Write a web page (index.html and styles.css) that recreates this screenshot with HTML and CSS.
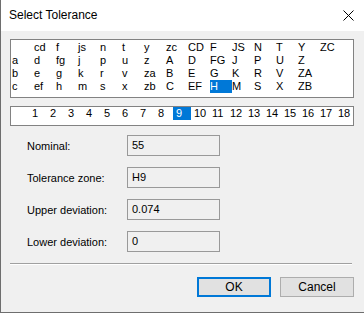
FILE: index.html
```html
<!DOCTYPE html>
<html>
<head>
<meta charset="utf-8">
<link rel="stylesheet" href="styles.css">
</head>
<body>
<div class="window">
  <div class="titlebar">
    <span class="title">Select Tolerance</span>
    <svg class="close" width="11" height="11" viewBox="0 0 11 11"><path d="M0.5 0.5 L10.5 10.5 M10.5 0.5 L0.5 10.5" stroke="#000" stroke-width="1" fill="none"/></svg>
  </div>
  <div class="content">
    <div class="letters">
      <span></span><span>cd</span><span>f</span><span>js</span><span>n</span><span>t</span><span>y</span><span>zc</span><span>CD</span><span>F</span><span>JS</span><span>N</span><span>T</span><span>Y</span><span>ZC</span>
      <span>a</span><span>d</span><span>fg</span><span>j</span><span>p</span><span>u</span><span>z</span><span>A</span><span>D</span><span>FG</span><span>J</span><span>P</span><span>U</span><span>Z</span><span></span>
      <span>b</span><span>e</span><span>g</span><span>k</span><span>r</span><span>v</span><span>za</span><span>B</span><span>E</span><span>G</span><span>K</span><span>R</span><span>V</span><span>ZA</span><span></span>
      <span>c</span><span>ef</span><span>h</span><span>m</span><span>s</span><span>x</span><span>zb</span><span>C</span><span>EF</span><span class="sel">H</span><span>M</span><span>S</span><span>X</span><span>ZB</span><span></span>
    </div>
    <div class="grades">
      <span>1</span><span>2</span><span>3</span><span>4</span><span>5</span><span>6</span><span>7</span><span>8</span><span class="sel">9</span><span>10</span><span>11</span><span>12</span><span>13</span><span>14</span><span>15</span><span>16</span><span>17</span><span>18</span>
    </div>
    <div class="fields">
      <label>Nominal:</label><div class="field">55</div>
      <label>Tolerance zone:</label><div class="field">H9</div>
      <label>Upper deviation:</label><div class="field">0.074</div>
      <label>Lower deviation:</label><div class="field">0</div>
    </div>
    <div class="separator"></div>
    <div class="buttons">
      <button class="btn default">OK</button>
      <button class="btn">Cancel</button>
    </div>
  </div>
</div>
</body>
</html>
```
FILE: styles.css
```css
html, body {
  margin: 0;
  padding: 0;
}
body {
  width: 364px;
  height: 313px;
  overflow: hidden;
  font-family: "Liberation Sans", Arial, sans-serif;
  font-size: 11px;
  color: #000;
}
.window {
  box-sizing: border-box;
  width: 364px;
  height: 313px;
  background: #f0f0f0;
  border-left: 1px solid #6e6e6e;
  border-bottom: 1px solid #6e6e6e;
  display: flex;
  flex-direction: column;
}
.titlebar {
  height: 31px;
  background: #fff;
  display: flex;
  align-items: center;
  justify-content: space-between;
  padding: 0 10px 0 8px;
  flex: none;
}
.title {
  font-size: 12px;
  font-family: "Liberation Sans", Arial, sans-serif;
  margin-top: -1px;
}
.close {
  display: block;
  margin-top: -1px;
}
.content {
  padding: 8px 10px 0 9px;
  display: flex;
  flex-direction: column;
}
.letters {
  box-sizing: border-box;
  width: 344px;
  height: 59px;
  background: #fff;
  border: 1px solid #828282;
  padding: 1px 0 0 1px;
  display: grid;
  grid-template-columns: repeat(15, 22px);
  grid-auto-rows: 13px;
  line-height: 13px;
}
.letters span {
  white-space: nowrap;
}
.sel {
  background: #0078d7;
  color: #fff;
}
.grades {
  box-sizing: border-box;
  width: 344px;
  height: 20px;
  margin-top: 8px;
  background: #fff;
  border: 1px solid #828282;
  padding: 0 0 0 18px;
  display: grid;
  grid-template-columns: repeat(18, 18px);
  grid-auto-rows: 13px;
  line-height: 13px;
}
.grades span {
  padding-left: 3px;
}
.fields {
  margin-top: 9px;
  display: grid;
  grid-template-columns: 100px 93px;
  grid-auto-rows: 21px;
  row-gap: 11px;
  padding-left: 17px;
  align-items: center;
}
.field {
  box-sizing: border-box;
  height: 21px;
  border: 1px solid #999;
  padding-left: 4px;
  line-height: 19px;
  background: #f0f0f0;
}
.separator {
  margin-top: 11px;
  width: 342px;
  height: 1px;
  background: #a0a0a0;
  border-bottom: 1px solid #fff;
}
.buttons {
  margin-top: 12px;
  display: flex;
  justify-content: flex-end;
  gap: 9px;
  padding-right: 0;
}
.btn {
  box-sizing: border-box;
  width: 74px;
  height: 20px;
  margin: 0;
  padding: 0;
  font-family: "Liberation Sans", Arial, sans-serif;
  font-size: 12px;
  color: #000;
  background: #e1e1e1;
  border: 1px solid #adadad;
}
.btn.default {
  border: 2px solid #0078d7;
}
```
